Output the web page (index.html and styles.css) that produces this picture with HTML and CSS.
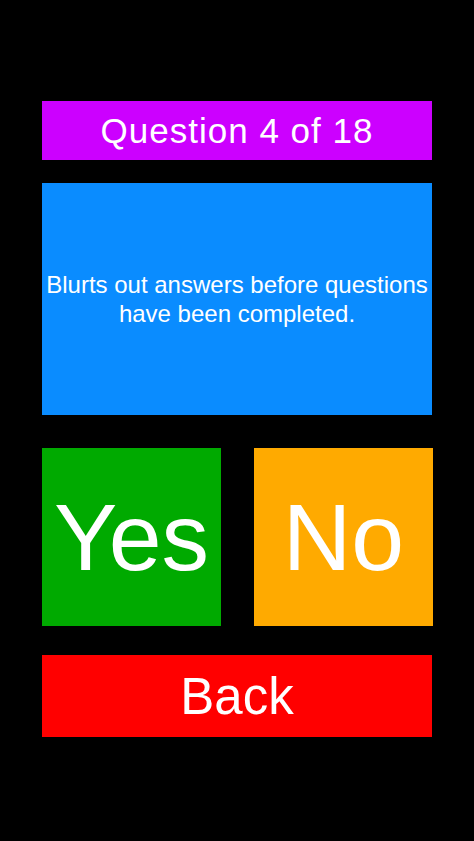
FILE: index.html
```html
<!DOCTYPE html>
<html>
<head>
<meta charset="utf-8">
<link rel="stylesheet" href="styles.css">
</head>
<body>
<main class="screen">
  <div class="tile title">Question 4 of 18</div>
  <div class="tile question">Blurts out answers before questions have been completed.</div>
  <div class="answers">
    <div class="tile answer yes">Yes</div>
    <div class="tile answer no">No</div>
  </div>
  <div class="tile back">Back</div>
</main>
</body>
</html>
```

FILE: styles.css
```css
html, body {
  margin: 0;
  padding: 0;
  background: #000;
}
body {
  width: 474px;
  height: 841px;
  font-family: "Liberation Sans", Arial, sans-serif;
  color: #fff;
}
.screen {
  display: flex;
  flex-direction: column;
  padding: 101px 0 0 42px;
  width: 390px;
}
.tile {
  display: flex;
  align-items: center;
  justify-content: center;
  text-align: center;
}
.title {
  height: 59px;
  background: #cc00ff;
  font-size: 35px;
  letter-spacing: 1px;
}
.question {
  margin-top: 23px;
  height: 232px;
  background: #0a8cff;
  font-size: 24px;
  line-height: 29px;
}
.answers {
  margin-top: 33px;
  display: grid;
  grid-template-columns: 179px 179px;
  column-gap: 33px;
}
.answer {
  height: 178px;
  font-size: 95px;
}
.yes { background: #00aa00; }
.no { background: #ffaa00; }
.back {
  margin-top: 29px;
  height: 82px;
  background: #ff0000;
  font-size: 51px;
}
```
